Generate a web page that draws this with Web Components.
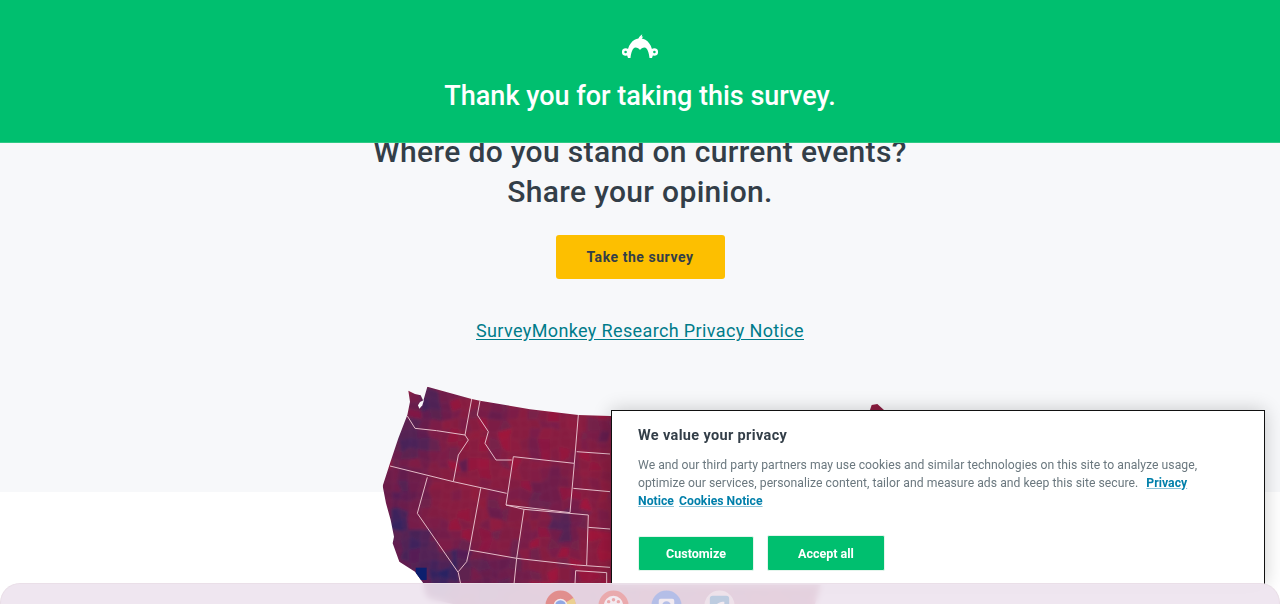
<!DOCTYPE html>
<html lang="en"><head><meta charset="utf-8"><title>SurveyMonkey</title>
<style>
html,body{margin:0;height:100%;overflow:hidden;background:#fff;font-family:Roboto,"Noto Sans",sans-serif}
sm-page{display:block;height:100vh}
</style></head><body>
<sm-page>
  <sm-header>Thank you for taking this survey.</sm-header>
  <sm-hero>
    <span slot="title">Where do you stand on current events?<br>Share your opinion.</span>
    <span slot="cta">Take the survey</span>
    <span slot="link">SurveyMonkey Research Privacy Notice</span>
  </sm-hero>
</sm-page>
<cookie-banner></cookie-banner>
<dock-bar></dock-bar>
<script>
class SmHeader extends HTMLElement{constructor(){super();this.attachShadow({mode:'open'}).innerHTML=`<style>
:host{display:flex;flex-direction:column;align-items:center;height:143px;box-sizing:border-box;padding-top:34px;background:#00bf6f;border-bottom:1px solid #2fc985;position:relative;z-index:2}
svg{display:block;width:36px;height:26px}
h1{margin:16px 0 0;font:500 27px/40px Roboto,sans-serif;color:#fff;letter-spacing:0}
</style><svg viewBox="0 0 36 26" fill="#fff" aria-hidden="true">
<path d="M5 21C5.500 12 10 4.500 18 4.500S30.500 12 31 21L30 24H27.500C27 19 25.500 13.500 22.500 13.500 20.500 13.500 19 14.500 18 16 17 14.500 15.500 13.500 13.500 13.500 10.500 13.500 9 19 8.500 24H6z"/>
<circle cx="3.600" cy="18" r="2.500" fill="none" stroke="#fff" stroke-width="2.400"/><circle cx="32.400" cy="18" r="2.500" fill="none" stroke="#fff" stroke-width="2.400"/>
<path d="M16 5.500c.5-1.800 2-3.800 4.300-5.300-.3 1-.5 1.800-.5 2.500l1.500-.3c-.9.900-1.500 1.900-1.800 3.200z"/>
</svg><h1><slot></slot></h1>`}}
customElements.define('sm-header',SmHeader);

class SmHero extends HTMLElement{constructor(){super();this.attachShadow({mode:'open'}).innerHTML=`<style>
:host{display:flex;flex-direction:column;align-items:center;height:349px;box-sizing:border-box;background:#f7f8fa;position:relative;color:#333e48}
h2{margin:-11px 0 0;font:500 30px/40px Roboto,sans-serif;text-align:center;color:#333e48;letter-spacing:.34px}
a.btn{display:flex;align-items:center;justify-content:center;margin-top:23px;width:169px;height:44px;box-sizing:border-box;background:#fdbf00;border-radius:3px;font:700 14px Roboto,sans-serif;letter-spacing:.55px;color:#333e48;text-decoration:none}
a.lnk{margin-top:39px;font:400 18px/26px Roboto,sans-serif;letter-spacing:.37px;color:#007c8a;text-decoration:underline;text-underline-offset:2px}
us-map{position:absolute;left:370px;top:237px}
</style><h2><slot name="title"></slot></h2><a class="btn" href="#"><slot name="cta"></slot></a><a class="lnk" href="#"><slot name="link"></slot></a><us-map></us-map>`}}
customElements.define('sm-hero',SmHero);

class UsMap extends HTMLElement{constructor(){super();
const outline="115,32 135,42 152,46 160,62 172,20 305,57 330,62 480,88 625,105 720,108 1490,108 1500,90 1505,75 1522,72 1542,90 1560,200 1540,450 1353,612 1335,672 250,672 175,655 165,640 160,610 135,575 88,545 68,490 72,470 62,420 48,370 38,318 60,250 85,175 112,105 120,65";
const lines=[
"112,108 135,145 200,152 285,165 295,180 265,225 250,305",
"305,57 285,165","330,62 322,105 355,155 345,190 378,240 425,240",
"60,258 250,305 410,340","430,230 613,250 600,398 408,375 430,230",
"172,292 142,400 265,578 272,612","332,325 298,510 290,545 265,575",
"298,510 440,535 620,555 720,562","462,388 440,535 432,612","408,375 462,388 655,405 650,555",
"625,105 613,250","620,215 720,222","610,325 720,335","655,442 720,447",
"617,572 710,578 710,612","617,572 615,610"];
const blobs=[[180,72,34,.85],[125,180,55,.68],[95,330,52,.58],[88,430,36,.98],[130,500,55,.8],[210,585,55,1],[265,540,30,.95],[580,440,34,.7],[510,205,14,.5],[375,95,26,.38],[385,395,14,.6],[700,165,24,.4],[530,320,52,.34],[370,590,75,.45],[160,330,16,.45],[280,260,10,.5]];
let s=12345;const R=()=>(s=(s*16807)%2147483647)/2147483647;
const cols=52,rows=23,cw=30,ch=30,P=[];
for(let r=0;r<=rows;r++){P[r]=[];for(let c=0;c<=cols;c++)P[r][c]=[c*cw+(R()-.5)*18,r*ch+(R()-.5)*18]}
const mix=(a,b,t)=>a.map((v,i)=>Math.round(v+(b[i]-v)*t));
let tiles='';
for(let r=0;r<rows;r++)for(let c=0;c<cols;c++){
 const x=c*cw+15,y=r*ch+15;let d=0;
 for(const[bx,by,br,bd]of blobs){const g=Math.exp(-((x-bx)**2+(y-by)**2)/(2*br*br));d=Math.max(d,bd*g)}
 const n=R();let col=mix([136,28,64],[165,20,58],n>.7?(n-.7)*3:0);
 col=mix(col,[112,34,78],n<.35?(.35-n)*2:0);
 col=mix(col,[44,36,98],Math.min(1,d*(.8+R()*.3)));
 tiles+=`<polygon points="${P[r][c]} ${P[r][c+1]} ${P[r+1][c+1]} ${P[r+1][c]}" fill="rgb(${col})" stroke="rgb(${col})" stroke-width="2"/>`;
}
this.attachShadow({mode:'open'}).innerHTML=`<style>:host{display:block;width:520px;height:224px}svg{display:block;width:520px;height:224px}</style>
<svg viewBox="0 0 1560 672" aria-hidden="true"><defs><clipPath id="c"><polygon points="${outline}"/></clipPath><filter id="b" x="-2%" y="-2%" width="104%" height="104%"><feGaussianBlur stdDeviation="4"/></filter></defs>
<g clip-path="url(#c)"><g filter="url(#b)">${tiles}</g>
<rect x="137" y="563" width="33" height="37" fill="#0c1f6e"/>
${lines.map(l=>`<polyline points="${l}" fill="none" stroke="#e4bcc8" stroke-width="3"/>`).join('')}</g>
<path d="M150 66l12-6-5 16-9 10-4-10z" fill="#f7f8fa"/></svg>`}}
customElements.define('us-map',UsMap);

class CookieBanner extends HTMLElement{constructor(){super();this.attachShadow({mode:'open'}).innerHTML=`<style>
:host{display:block;position:fixed;left:611px;top:410px;width:654px;height:175px;box-sizing:border-box;background:#fff;border:1px solid #111;border-bottom:0;padding:15px 26px 0;box-shadow:0 0 18px rgba(0,0,0,.2);z-index:3;font-family:Roboto,sans-serif}
h3{margin:0;font:700 14.500px/20px Roboto,sans-serif;letter-spacing:.35px;color:#333e48}
p{margin:10px 0 0;width:570px;font:400 12.200px/18px Roboto,sans-serif;letter-spacing:.03px;color:#6b787f}
a{color:#007faa;font-weight:700;text-decoration:underline;text-decoration-color:#8cc3d8}
a.p1{margin-left:5px}
a.p2{margin-left:2px}
.row{display:flex;gap:13px;align-items:center;margin-top:25px}
button{border:1px solid #e3f5ec;background:#00bf6f;color:#fff;font:700 12.500px Roboto,sans-serif;border-radius:2px;padding:0}
.c{width:116px;height:35px}.a{width:118px;height:36px}
</style><h3>We value your privacy</h3>
<p>We and our third party partners may use cookies and similar technologies on this site to analyze usage, optimize our services, personalize content, tailor and measure ads and keep this site secure. <a class="p1" href="#">Privacy Notice</a> <a class="p2" href="#">Cookies Notice</a></p>
<div class="row"><button class="c">Customize</button><button class="a">Accept all</button></div>`}}
customElements.define('cookie-banner',CookieBanner);

class DockBar extends HTMLElement{constructor(){super();this.attachShadow({mode:'open'}).innerHTML=`<style>
:host{display:flex;justify-content:center;gap:22px;position:fixed;left:0;right:0;bottom:0;height:21px;box-sizing:border-box;padding-top:6px;overflow:hidden;background:rgba(237,228,238,.91);backdrop-filter:blur(3px);border:1px solid #eadfe8;border-bottom:0;border-radius:20px 20px 0 0;z-index:4}
svg{width:31px;height:31px;flex:none;opacity:.55;display:block}
</style>
<svg viewBox="0 0 32 32"><circle cx="16" cy="16" r="15.500" fill="#e0584c"/><path d="M16 16 29.500 8A15.500 15.500 0 0 1 23 30z" fill="#f5cf52"/><path d="M16 16 23 30A15.500 15.500 0 0 1 3 24z" fill="#5cb56e"/><circle cx="16" cy="16" r="7" fill="#fff"/><circle cx="16" cy="16" r="5.500" fill="#4d86ea"/></svg>
<svg viewBox="0 0 32 32"><circle cx="16" cy="16" r="15.500" fill="#ef8a86"/><circle cx="16" cy="16" r="10" fill="#fff"/><g fill="#ef8a86"><circle cx="11" cy="12" r="1.800"/><circle cx="16" cy="10" r="1.800"/><circle cx="21" cy="12" r="1.800"/></g></svg>
<svg viewBox="0 0 32 32"><circle cx="16" cy="16" r="15.500" fill="#8fb0ee"/><rect x="8" y="9" width="16" height="14" rx="2" fill="#fff"/><circle cx="16" cy="16" r="4.500" fill="#8fb0ee"/></svg>
<svg viewBox="0 0 32 32"><circle cx="16" cy="16" r="15.500" fill="#f6f0f5"/><rect x="6" y="6" width="20" height="20" rx="3" fill="#9ec8e2"/><path d="M11 18c2-5 6-6 10-6v4c-3 0-5 1-6 4z" fill="#fff"/></svg>`}}
customElements.define('dock-bar',DockBar);
</script>
</body></html>
